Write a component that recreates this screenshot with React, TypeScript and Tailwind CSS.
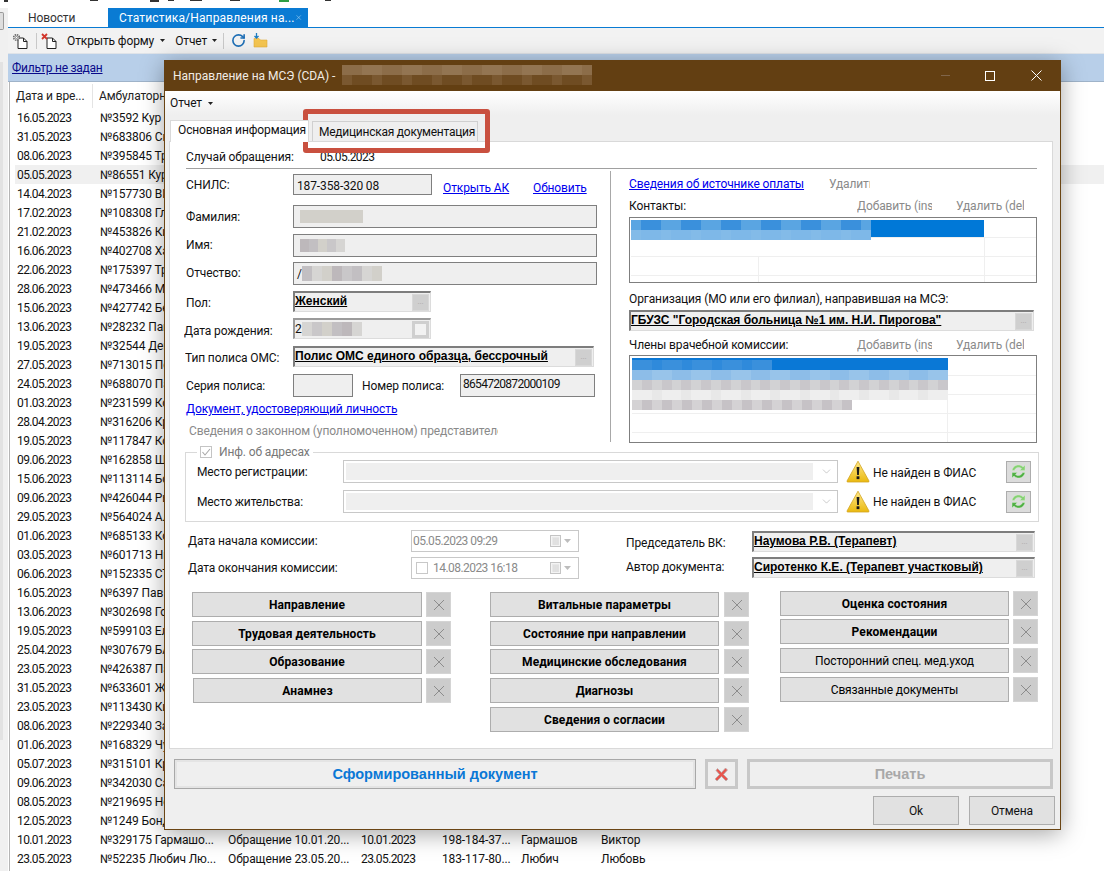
import React from "react";
import { RotateCw, ChevronDown, X } from "lucide-react";

const rows: [string, string][] = [
  ["16.05.2023", "№3592 Кур"],["31.05.2023", "№683806 Ск"],["08.06.2023", "№395845 Тр"],["05.05.2023", "№86551 Кур"],
  ["14.04.2023", "№157730 ВИ"],["17.02.2023", "№108308 Гл"],["21.02.2023", "№453826 Ки"],["16.06.2023", "№402708 Ха"],
  ["22.06.2023", "№175397 Тр"],["28.06.2023", "№473466 Му"],["15.06.2023", "№427742 Бе"],["13.06.2023", "№28232 Пак"],
  ["19.05.2023", "№32544 Ден"],["27.05.2023", "№713015 По"],["24.05.2023", "№688070 Па"],["01.03.2023", "№231599 Ко"],
  ["28.04.2023", "№316206 Кр"],["19.05.2023", "№117847 Ко"],["09.06.2023", "№162858 Ш"],["15.06.2023", "№113114 Бо"],
  ["09.06.2023", "№426044 Ры"],["29.05.2023", "№564024 Ал"],["01.06.2023", "№685133 Ко"],["03.05.2023", "№601713 Ни"],
  ["06.06.2023", "№152335 СТ"],["16.05.2023", "№6397 Пав"],["13.06.2023", "№302698 Го"],["19.05.2023", "№599103 Ел"],
  ["25.04.2023", "№307679 БА"],["23.05.2023", "№426387 Па"],["31.05.2023", "№633601 Жу"],["23.05.2023", "№113430 Ки"],
  ["08.06.2023", "№229340 За"],["01.06.2023", "№168329 Чу"],["05.07.2023", "№315101 Кр"],["09.06.2023", "№342030 Са"],
  ["08.05.2023", "№219695 Не"],["12.05.2023", "№1249 Бонд"],
];

const Mosaic = ({ rows: r, cols, cell = 10, cellH, seed = 1, tones }: { rows: number; cols: number; cell?: number; cellH?: number; seed?: number; tones: string[][] }) => (
  <div className="flex flex-col shrink-0">
    {Array.from({ length: r }).map((_, i) => (
      <div key={i} className="flex">
        {Array.from({ length: cols }).map((_, j) => {
          const t = tones[i % tones.length];
          const c = t[(((j + 3) * (seed + 7) * 31 + i * 17 + j * j * 5) >>> 0) % t.length];
          return <div key={j} style={{ width: cell, height: cellH ?? cell, background: c }} />;
        })}
      </div>
    ))}
  </div>
);

const GREY = [["#d2d0ca", "#bdb8bb", "#c9c7c9", "#c2bfc2", "#d6d5d3"], ["#e6e4e5", "#e0dfe0", "#e9e9e9", "#e2e0e2"]];

const L = ({ w, children, className = "" }: { w: string; children: React.ReactNode; className?: string }) => (
  <span className={`${w} shrink-0 whitespace-nowrap overflow-hidden ${className}`}>{children}</span>
);

const Ell = () => (
  <span className="flex items-center justify-center w-[17px] h-[17px] bg-[#cfcfcf] border border-[#d8d8d8] text-[8px] leading-none text-[#a8a8a8] pb-[1px] shrink-0">...</span>
);

const Lookup = ({ text, w, h = "h-[21px]" }: { text: string; w: string; h?: string }) => (
  <div className={`${w} ${h} shrink-0 flex items-start justify-between bg-[#efefef] border-t-2 border-l-2 border-t-[#7d7d7d] border-l-[#7d7d7d] border-r border-b border-r-[#dcdcdc] border-b-[#dcdcdc] pr-[1px]`}>
    <span className="font-['Liberation_Sans',sans-serif] font-bold text-[12px] leading-[14px] tracking-normal underline text-black whitespace-nowrap mt-[1px]">{text}</span>
    <span className="mt-[1px]"><Ell /></span>
  </div>
);

const Field = ({ w, h, children, className = "" }: { w: string; h: string; children?: React.ReactNode; className?: string }) => (
  <div className={`${w} ${h} shrink-0 bg-[#efefef] border border-[#7f7f7f] flex items-center overflow-hidden ${className}`}>{children}</div>
);

const XBtn = () => (
  <span className="w-[25px] h-[25px] shrink-0 bg-[#cccccc] border border-[#d4d4d4] flex items-center justify-center">
    <svg width="12" height="12" viewBox="0 0 12 12" stroke="#8c8c8c" strokeWidth="1"><path d="M1 1l10 10M11 1L1 11" /></svg>
  </span>
);

const ActionBtn = ({ text, w, bold = true, ml = "" }: { text: string; w: string; bold?: boolean; ml?: string }) => (
  <div className={`${w} ${ml} h-[25px] shrink-0 bg-[#e1e1e1] border border-[#adadad] flex items-center justify-center text-black whitespace-nowrap ${bold ? "font-bold tracking-[0.1px]" : ""}`}>{text}</div>
);

const Warn = () => (
  <svg width="24" height="23" viewBox="0 0 24 23" className="shrink-0">
    <defs><linearGradient id="wg" x1="0" y1="0" x2="0" y2="1"><stop offset="0" stopColor="#ffe98a" /><stop offset="1" stopColor="#eab90f" /></linearGradient></defs>
    <path d="M12 1.2L23 21c.2.6-.1 1-.7 1H1.7c-.6 0-.9-.4-.7-1L12 1.2z" fill="url(#wg)" stroke="#d3a521" strokeWidth="0.8" />
    <path d="M10.6 7h2.8l-.5 8h-1.8z" fill="#1a1a1a" /><rect x="10.6" y="16.3" width="2.8" height="2.8" fill="#1a1a1a" />
  </svg>
);

const Refresh = () => (
  <span className="w-[25px] h-[22px] shrink-0 bg-[#dcdcdc] border border-[#adadad] flex items-center justify-center">
    <svg width="17" height="17" viewBox="0 0 17 17">
      <path d="M2 7.5C2.6 3.6 6 1.5 9.3 2c1.7.3 2.9 1.1 3.700 2L15 2v5.400H9.600l1.900-1.900C10.600 4.700 9.400 4.400 8.300 4.500 6.500 4.700 5 5.800 4.500 7.500z" fill="#86d173" stroke="#d6efd0" strokeWidth="0.5" />
      <path d="M15 9.500c-.6 3.900-4 6-7.300 5.500-1.700-.3-2.900-1.100-3.700-2L2 15V9.600h5.400l-1.900 1.900c.9.800 2.100 1.100 3.200 1 1.800-.2 3.300-1.300 3.800-3z" fill="#4fb043" stroke="#d6efd0" strokeWidth="0.5" />
    </svg>
  </span>
);

const Calendar = () => (
  <span className="flex items-center gap-[2px] shrink-0">
    <svg width="12" height="12" viewBox="0 0 12 12"><rect x="0.5" y="0.5" width="10" height="11" fill="#f4f4f4" stroke="#c4c4c4" /><path d="M2 3h7M2 5h7M2 7h7M2 9h7M4 3v7M6 3v7M8 3v7" stroke="#d2d2d2" strokeWidth="0.7" /></svg>
    <svg width="7" height="4" viewBox="0 0 7 4"><path d="M0 0h7L3.500 4z" fill="#bdbdbd" /></svg>
  </span>
);

const Combo = () => (
  <div className="w-[495px] h-[23px] shrink-0 border border-[#c8c8c8] bg-white flex items-center p-[2px] justify-between">
    <div className="w-[467px] h-[17px] bg-[#efefef]" />
    <ChevronDown size={13} strokeWidth={1} className="text-[#a0a0a0] mr-[2px]" />
  </div>
);

const Caret = ({ className = "" }: { className?: string }) => (
  <svg width="5" height="3" viewBox="0 0 5 3" className={className}><path d="M0 0h5L2.500 3z" fill="#222" /></svg>
);

export default function App() {
  return (
    <div className="relative w-[1104px] h-[871px] overflow-hidden bg-white text-[12px] leading-[16px] tracking-[-0.12px] text-[#111] font-['Roboto',sans-serif]">
      {/* top strip: the cropped edge of the window above */}
      <div className="h-[8px] bg-white">
        <svg width="340" height="3" viewBox="0 0 340 3" className="block">
          <path d="M4 0h4v2H4zM90 0h8v1h-8zM150 0h9v2h-9zM168 0h6v1h-6zM190 0h12v1h-12zM230 0h10v1h-10zM325 0h6v1h-6z" fill="#333" />
          <path d="M279 0h10v2h-10z" fill="#2f9e44" />
        </svg>
      </div>
      <div className="flex h-[863px]">
        {/* left gutter */}
        <div className="w-[8px] shrink-0 bg-[#f0f0f0] flex flex-col">
          <div className="h-[18px] w-[4px] mt-[4px] border border-l-0 border-[#9a9a9a] rounded-r-[2px] bg-[#dedede]" />
          <div className="h-[32px]" />
          <div className="h-[678px] w-[3px] bg-[#e2e2e2]" />
        </div>
        <div className="flex-1 flex flex-col min-w-0">
          {/* tabs */}
          <div className="h-[19px] flex items-stretch bg-white">
            <div className="w-[100px] flex items-center pl-[20px] text-[#333]">Новости</div>
            <div className="w-[200px] bg-[#0a7bd3] text-white flex items-center pl-[11px] justify-between pr-[6px] tracking-[0.15px]">
              <span className="whitespace-nowrap">Статистика/Направления на...</span>
              <X size={11} strokeWidth={2} className="text-[#9fd0f0]" />
            </div>
          </div>
          <div className="h-[1px] bg-[#0a7bd3]" />
          {/* toolbar */}
          <div className="h-[26px] bg-[#f2f2f2] flex items-center pl-[4px] text-[#111] border-b border-[#dfe3e8]">
            <svg width="16" height="16" viewBox="0 0 16 16">
              <path d="M6 5h5.500L15 8.500V15.500H6z" fill="#fff" stroke="#222" />
              <path d="M11.500 5v3.500H15" fill="none" stroke="#222" />
              <circle cx="4.500" cy="4.500" r="2.800" fill="#e6e6e6" stroke="#666" strokeWidth="1.600" strokeDasharray="1.400 0.800" />
              <circle cx="4.500" cy="4.500" r="1.100" fill="#fff" stroke="#555" strokeWidth="0.600" />
            </svg>
            <span className="w-px h-[16px] bg-[#c8c8c8] ml-[8px] mr-[4px]" />
            <svg width="16" height="16" viewBox="0 0 16 16">
              <path d="M6 5h5.500L15 8.500V15.500H6z" fill="#fff" stroke="#222" />
              <path d="M11.500 5v3.500H15" fill="none" stroke="#222" />
              <path d="M1 1l5 5M6 1L1 6" stroke="#d2352a" strokeWidth="1.800" />
            </svg>
            <span className="ml-[10px] whitespace-nowrap">Открыть форму</span>
            <Caret className="ml-[6px]" />
            <span className="ml-[10px]">Отчет</span>
            <Caret className="ml-[5px]" />
            <span className="w-px h-[16px] bg-[#c8c8c8] ml-[6px] mr-[7px]" />
            <RotateCw size={15} strokeWidth={2.600} className="text-[#1f6fb5]" />
            <svg width="15" height="15" viewBox="0 0 15 15" className="ml-[7px]"><path d="M1 5.500h5l1.500 1.500H14v7H1z" fill="#f4c550" stroke="#e0ab35" strokeWidth="0.600" /><path d="M3.500 0v5M1.500 3l2 2 2-2" stroke="#1d7cc0" strokeWidth="1.300" fill="none" /></svg>
          </div>
          {/* filter */}
          <div className="h-[28px] bg-[#b8cfe9] flex items-center pl-[4px] border-b border-[#9fb3c9]">
            <span className="underline text-[#0a0a8a] tracking-[-0.25px] whitespace-nowrap">Фильтр не задан</span>
          </div>
          {/* table */}
          <div className="flex-1 ml-[1px] flex flex-col overflow-hidden border-l border-[#b5b5b5]">
            <div className="h-[26px] shrink-0 flex items-center text-[#222] pt-[2px]">
              <div className="w-[83px] pl-[6px] whitespace-nowrap border-r border-[#e4e4e4] h-[24px] flex items-center">Дата и вре...</div>
              <div className="pl-[6px] whitespace-nowrap">Амбулаторн</div>
            </div>
            {rows.map(([d, n], i) => (
              <div key={i} className={`h-[19px] shrink-0 flex items-center ml-[5px] whitespace-nowrap ${i === 3 ? "bg-[#f0f0f0]" : ""}`}>
                <div className="w-[85px] pl-[2px] shrink-0 tracking-[-0.6px]">{d}</div>
                <div>{n}</div>
              </div>
            ))}
            <div className="h-[19px] shrink-0 flex items-center ml-[5px] whitespace-nowrap">
              <div className="w-[85px] pl-[2px] tracking-[-0.6px]">10.01.2023</div>
              <div className="w-[128px]">№329175 Гармашо...</div>
              <div className="w-[133px]">Обращение 10.01.20...</div>
              <div className="w-[81px] tracking-[-0.6px]">10.01.2023</div>
              <div className="w-[79px]">198-184-37...</div>
              <div className="w-[80px]">Гармашов</div>
              <div>Виктор</div>
            </div>
            <div className="h-[19px] shrink-0 flex items-center ml-[5px] whitespace-nowrap">
              <div className="w-[85px] pl-[2px] tracking-[-0.6px]">23.05.2023</div>
              <div className="w-[128px]">№52235 Любич Лю...</div>
              <div className="w-[133px]">Обращение 23.05.20...</div>
              <div className="w-[81px] tracking-[-0.6px]">23.05.2023</div>
              <div className="w-[79px]">183-117-80...</div>
              <div className="w-[80px]">Любич</div>
              <div>Любовь</div>
            </div>
          </div>
        </div>
      </div>

      {/* modal window */}
      <div className="absolute left-[164px] top-[60px] w-[897px] h-[770px] bg-[#efefef] border-x border-b border-[#6a4514] shadow-[0_4px_22px_rgba(0,0,0,0.35)] flex flex-col">
        <div className="h-[31px] shrink-0 bg-[#633f12] -mx-px flex items-center pl-[9px] text-white">
          <span className="text-[#f2ece4] whitespace-nowrap tracking-normal">Направление на МСЭ (CDA) -</span>
          <div className="ml-[7px] mt-[-1px]">
            <Mosaic rows={2} cols={25} seed={2} tones={[["#84613a", "#8c6d49", "#7c5a33", "#937552"], ["#76512a", "#6f4c22", "#7a5830"]]} />
          </div>
          <div className="ml-auto flex items-center pr-[19px]">
            <span className="w-[9px] h-px bg-[#80654a]" />
            <span className="w-[10px] h-[10px] border border-white ml-[35px]" />
            <svg width="11" height="11" viewBox="0 0 11 11" stroke="#fff" strokeWidth="1" className="ml-[36px]"><path d="M.5.5l10 10M10.500.5l-10 10" /></svg>
          </div>
        </div>
        <div className="h-[24px] shrink-0 bg-gradient-to-b from-white to-[#efefef] flex items-center pl-[5px]">
          <span>Отчет</span>
          <Caret className="ml-[6px]" />
        </div>
        {/* tabs */}
        <div className="h-[26px] shrink-0 flex items-end pl-[5px] relative z-10">
          <div className="w-[139px] h-[22px] bg-white border border-b-0 border-[#d9d9d9] flex items-center pl-[7px] pb-[3px] whitespace-nowrap mb-[-1px] overflow-hidden">Основная информация</div>
          <div className="w-[166px] h-[20px] ml-[3px] bg-[#efefef] border border-b-0 border-[#d0d0d0] flex items-center pl-[6px] whitespace-nowrap tracking-[-0.25px]">Медицинская документация</div>
        </div>
        {/* panel */}
        <div className="ml-[4px] w-[884px] h-[608px] shrink-0 bg-white border border-[#d9d9d9] flex flex-col pl-[16px] text-[#111]">
          <div className="h-[26px] shrink-0 flex items-center pt-[3px]">
            <L w="w-[134px]">Случай обращения:</L>
            <span className="tracking-[-0.6px]">05.05.2023</span>
          </div>
          <div className="h-px w-[851px] shrink-0 bg-[#a0a0a0]" />
          <div className="h-[273px] shrink-0 flex">
            {/* left */}
            <div className="w-[425px] border-r border-[#a8a8a8] flex flex-col shrink-0 mt-[2px]">
              <div className="flex items-start mt-[3px]">
                <L w="w-[107px]" className="mt-[3px]">СНИЛС:</L>
                <Field w="w-[139px]" h="h-[21px]" className="pl-[3px] pt-[2px]">187-358-320 08</Field>
                <span className="ml-[11px] mt-[6px] underline text-[#0000ee] w-[90px]">Открыть АК</span>
                <span className="mt-[6px] underline text-[#0000ee]">Обновить</span>
              </div>
              <div className="flex items-center mt-[9px]">
                <L w="w-[107px]">Фамилия:</L>
                <Field w="w-[304px]" h="h-[23px]" className="pl-[6px]"><Mosaic rows={1} cols={7} cell={9} cellH={13} seed={3} tones={[GREY[0]]} /></Field>
              </div>
              <div className="flex items-center mt-[6px]">
                <L w="w-[107px]" className="pb-[2px]">Имя:</L>
                <Field w="w-[304px]" h="h-[23px]" className="pl-[6px]"><Mosaic rows={1} cols={5} cell={9} cellH={13} seed={5} tones={[GREY[0]]} /></Field>
              </div>
              <div className="flex items-center mt-[5px]">
                <L w="w-[107px]" className="pb-[2px]">Отчество:</L>
                <Field w="w-[304px]" h="h-[23px]" className="pl-[3px]"><span>/</span><Mosaic rows={1} cols={8} cell={10} cellH={15} seed={4} tones={[GREY[0]]} /></Field>
              </div>
              <div className="flex items-center mt-[6px]">
                <L w="w-[107px]" className="pt-[2px]">Пол:</L>
                <Lookup text="Женский" w="w-[138px]" />
              </div>
              <div className="flex items-center mt-[6px] -ml-[2px]">
                <L w="w-[109px]" className="pt-[4px]">Дата рождения:</L>
                <div className="w-[138px] h-[21px] bg-[#efefef] border-t-2 border-l-2 border-t-[#9a9a9a] border-l-[#9a9a9a] border-r border-b border-r-[#dcdcdc] border-b-[#dcdcdc] flex items-center justify-between pr-[1px] overflow-hidden">
                  <span className="flex items-center">2<Mosaic rows={1} cols={6} cellH={14} seed={6} tones={[GREY[0]]} /></span>
                  <span className="w-[17px] h-[17px] bg-[#cfcfcf] flex items-center justify-center"><span className="w-[11px] h-[11px] bg-[#f2f2f2]" /></span>
                </div>
              </div>
              <div className="flex items-center mt-[7px] -ml-[1px]">
                <L w="w-[108px]" className="pt-[2px]">Тип полиса ОМС:</L>
                <Lookup text="Полис ОМС единого образца, бессрочный" w="w-[301px]" />
              </div>
              <div className="flex items-center mt-[7px]">
                <L w="w-[107px]">Серия полиса:</L>
                <Field w="w-[60px]" h="h-[23px]" />
                <L w="w-[98px]" className="ml-[9px]">Номер полиса:</L>
                <Field w="w-[135px]" h="h-[23px]" className="pl-[2px] items-start pt-[1px] tracking-[-0.7px]">8654720872000109</Field>
              </div>
              <span className="mt-[4px] underline text-[#0000ee] h-[16px] whitespace-nowrap self-start">Документ, удостоверяющий личность</span>
              <div className="mt-[6px] ml-[3px] w-[309px] overflow-hidden whitespace-nowrap text-[#8a8a8a]">Сведения о законном (уполномоченном) представителе</div>
            </div>
            {/* right */}
            <div className="flex-1 pl-[18px] flex flex-col">
              <div className="flex mt-[7px] h-[16px] whitespace-nowrap">
                <span className="underline text-[#0000ee] w-[200px]">Сведения об источнике оплаты</span>
                <L w="w-[41px]" className="text-[#8a8a8a]">Удалить</L>
              </div>
              <div className="flex mt-[6px] h-[16px] whitespace-nowrap">
                <span className="w-[228px]">Контакты:</span>
                <L w="w-[75px]" className="text-[#8a8a8a]">Добавить (ins)</L>
                <L w="w-[68px]" className="ml-[24px] text-[#8a8a8a]">Удалить (del)</L>
              </div>
              {/* contacts grid */}
              <div className="w-[408px] h-[66px] mt-[3px] border border-[#7f7f7f] flex flex-col pl-[1px] pt-[2px] shrink-0 overflow-hidden">
                <div className="w-[353px] h-[17px] bg-[#0078d7] shrink-0 relative z-10">
                  <Mosaic rows={2} cols={24} seed={8} tones={[["#3f95de", "#3a90dc", "#4c9de0", "#5aa5e2"], ["#76b3e6", "#7eb8e8", "#83bbe8"]]} />
                </div>
                <div className="h-[19px] shrink-0 flex border-t border-[#efefef]">
                  <div className="w-[354px] border-r border-[#efefef]" />
                </div>
                <div className="h-[19px] shrink-0 flex border-t border-[#efefef]">
                  <div className="w-[128px] border-r border-[#efefef]" />
                  <div className="w-[226px] border-r border-[#efefef]" />
                </div>
                <div className="h-[8px] shrink-0 flex border-t border-[#efefef]">
                  <div className="w-[128px] border-r border-[#efefef]" />
                  <div className="w-[226px] border-r border-[#efefef]" />
                </div>
              </div>
              <div className="mt-[8px] h-[16px] whitespace-nowrap">Организация (МО или его филиал), направившая на МСЭ:</div>
              <div className="mt-[3px]">
                <Lookup text={'ГБУЗС "Городская больница №1 им. Н.И. Пирогова"'} w="w-[405px]" />
              </div>
              <div className="flex mt-[6px] h-[16px] whitespace-nowrap">
                <span className="w-[228px]">Члены врачебной комиссии:</span>
                <L w="w-[75px]" className="text-[#8a8a8a]">Добавить (ins)</L>
                <L w="w-[68px]" className="ml-[24px] text-[#8a8a8a]">Удалить (del)</L>
              </div>
              {/* commission members grid */}
              <div className="w-[408px] h-[88px] mt-[2px] border border-[#7f7f7f] pl-[2px] pt-[2px] shrink-0 overflow-hidden flex flex-col">
                <div className="w-[316px] h-[17px] bg-[#0a78d6] shrink-0 relative z-10">
                  <div className="pt-[2px] flex flex-col">
                    <Mosaic rows={1} cols={14} seed={9} tones={[["#3a90dc", "#2f8adb", "#4498de"]]} />
                    <Mosaic rows={1} cols={32} seed={10} tones={[["#7eb5e5", "#8dbde8", "#76b0e3", "#98c4ea"]]} />
                    <Mosaic rows={1} cols={32} seed={11} tones={[["#d8d8d8", "#c9c7cb", "#d2d2d4", "#e0e0e0"]]} />
                    <Mosaic rows={1} cols={32} seed={12} tones={[["#eeeeee", "#e8e8e8", "#f2f2f2"]]} />
                    <Mosaic rows={1} cols={22} seed={13} tones={[["#d4d2d4", "#c6c2c6", "#dedddd", "#c9c4c8"]]} />
                  </div>
                </div>
                {[19, 19, 19, 13].map((h, i) => (
                  <div key={i} style={{ height: h }} className="shrink-0 flex border-t border-[#efefef]">
                    <div className="w-[316px] border-r border-[#efefef]" />
                  </div>
                ))}
              </div>
            </div>
          </div>
          {/* address group */}
          <div className="w-[854px] h-[70px] mt-[10px] -ml-[1px] shrink-0 border border-[#d9d9d9] flex flex-col pl-[11px] relative">
            <div className="absolute -top-[9px] left-[11px] bg-white flex items-center px-[3px] h-[16px] text-[#777]">
              <span className="w-[12px] h-[12px] border border-[#c4c4c4] flex items-center justify-center mr-[7px]">
                <svg width="10" height="10" viewBox="0 0 10 10"><path d="M1.500 5l2.500 3 5-6" fill="none" stroke="#a8a8a8" strokeWidth="1.100" /></svg>
              </span>
              Инф. об адресах
            </div>
            <div className="flex items-center mt-[7px]">
              <L w="w-[146px]" className="pt-[1px]">Место регистрации:</L>
              <Combo />
              <span className="ml-[8px]"><Warn /></span>
              <L w="w-[133px]" className="ml-[3px] pt-[2px]">Не найден в ФИАС</L>
              <Refresh />
            </div>
            <div className="flex items-center mt-[7px]">
              <L w="w-[146px]">Место жительства:</L>
              <Combo />
              <span className="ml-[8px]"><Warn /></span>
              <L w="w-[133px]" className="ml-[3px] pt-[1px]">Не найден в ФИАС</L>
              <Refresh />
            </div>
          </div>
          {/* dates */}
          <div className="flex mt-[8px] h-[49px] shrink-0 ml-[2px]">
            <div className="w-[223px] flex flex-col text-[#111]">
              <span className="h-[22px] flex items-center">Дата начала комиссии:</span>
              <span className="h-[22px] mt-[5px] flex items-center">Дата окончания комиссии:</span>
            </div>
            <div className="flex flex-col w-[215px] shrink-0">
              <div className="w-[168px] h-[22px] border border-[#c8c8c8] flex items-center justify-between pl-[1px] pr-[7px] text-[#8a8a8a]"><span className="tracking-[-0.55px]">05.05.2023 09:29</span><Calendar /></div>
              <div className="w-[168px] h-[22px] mt-[5px] border border-[#c8c8c8] flex items-center justify-between pl-[4px] pr-[7px] text-[#8a8a8a]">
                <span className="flex items-center tracking-[-0.55px]"><span className="w-[12px] h-[12px] border border-[#c8c8c8] mr-[5px]" />14.08.2023 16:18</span><Calendar />
              </div>
            </div>
            <div className="w-[126px] flex flex-col shrink-0">
              <span className="h-[24px] flex items-center mt-[1px]">Председатель ВК:</span>
              <span className="h-[24px] flex items-center">Автор документа:</span>
            </div>
            <div className="flex flex-col pt-[1px]">
              <Lookup text="Наумова Р.В. (Терапевт)" w="w-[283px]" />
              <div className="mt-[5px]"><Lookup text="Сиротенко К.Е. (Терапевт участковый)" w="w-[283px]" /></div>
            </div>
          </div>
          {/* action buttons */}
          <div className="flex mt-[13px] ml-[6px] shrink-0">
            <div className="w-[298px] flex flex-col shrink-0">
              <div className="flex items-center gap-[4px]"><ActionBtn text="Направление" w="w-[230px]" /><XBtn /></div>
              <div className="flex items-center gap-[4px] mt-[4px]"><ActionBtn text="Трудовая деятельность" w="w-[230px]" /><XBtn /></div>
              <div className="flex items-center gap-[4px] mt-[3px]"><ActionBtn text="Образование" w="w-[230px]" /><XBtn /></div>
              <div className="flex items-center gap-[4px] mt-[4px]"><ActionBtn text="Анамнез" w="w-[229px]" ml="ml-[1px]" /><XBtn /></div>
            </div>
            <div className="w-[290px] flex flex-col shrink-0">
              <div className="flex items-center gap-[5px]"><ActionBtn text="Витальные параметры" w="w-[229px]" /><XBtn /></div>
              <div className="flex items-center gap-[5px] mt-[4px]"><ActionBtn text="Состояние при направлении" w="w-[229px]" /><XBtn /></div>
              <div className="flex items-center gap-[5px] mt-[3px]"><ActionBtn text="Медицинские обследования" w="w-[229px]" /><XBtn /></div>
              <div className="flex items-center gap-[5px] mt-[4px]"><ActionBtn text="Диагнозы" w="w-[229px]" /><XBtn /></div>
              <div className="flex items-center gap-[5px] mt-[4px]"><ActionBtn text="Сведения о согласии" w="w-[229px]" /><XBtn /></div>
            </div>
            <div className="flex flex-col shrink-0 -mt-[1px]">
              <div className="flex items-center gap-[4px]"><ActionBtn text="Оценка состояния" w="w-[229px]" /><XBtn /></div>
              <div className="flex items-center gap-[4px] mt-[3px]"><ActionBtn text="Рекомендации" w="w-[229px]" /><XBtn /></div>
              <div className="flex items-center gap-[4px] mt-[4px]"><ActionBtn text="Посторонний спец. мед.уход" w="w-[229px]" bold={false} /><XBtn /></div>
              <div className="flex items-center gap-[4px] mt-[4px]"><ActionBtn text="Связанные документы" w="w-[229px]" bold={false} /><XBtn /></div>
            </div>
          </div>
        </div>
        {/* bottom buttons */}
        <div className="flex ml-[9px] mt-[10px] shrink-0 font-['Liberation_Sans',sans-serif] font-bold text-[14.5px] tracking-normal">
          <div className="w-[522px] h-[30px] border border-[#a8a8a8] shadow-[inset_0_0_0_2px_#e4e4e4] flex items-center justify-center text-[#0a78d6]">Сформированный документ</div>
          <div className="w-[33px] h-[30px] ml-[9px] border-[3px] border-[#c8c8c8] flex items-center justify-center">
            <svg width="15" height="15" viewBox="0 0 15 15"><path d="M2 3.500L3.500 1.500 7.500 5.500 11.500 1 13.500 3 9.500 7.500 14 12 12 14 7.500 9.500 3 14 1 12 5.500 7.500z" fill="#e8564e" stroke="#b9b0b0" strokeWidth="0.800" /></svg>
          </div>
          <div className="w-[306px] h-[30px] ml-[9px] border-[3px] border-[#c8c8c8] flex items-center justify-center text-[#a8a8a8]">Печать</div>
        </div>
        <div className="flex justify-end mt-[7px] pr-[5px] shrink-0">
          <div className="w-[86px] h-[29px] bg-[#e1e1e1] border border-[#adadad] flex items-center justify-center">Ok</div>
          <div className="w-[86px] h-[29px] ml-[10px] bg-[#e1e1e1] border border-[#adadad] flex items-center justify-center">Отмена</div>
        </div>
      </div>

      {/* red highlight */}
      <div className="absolute left-[303px] top-[109px] w-[187px] h-[44px] border-[5px] border-[#c9503f] rounded-[3px]" />
    </div>
  );
}
